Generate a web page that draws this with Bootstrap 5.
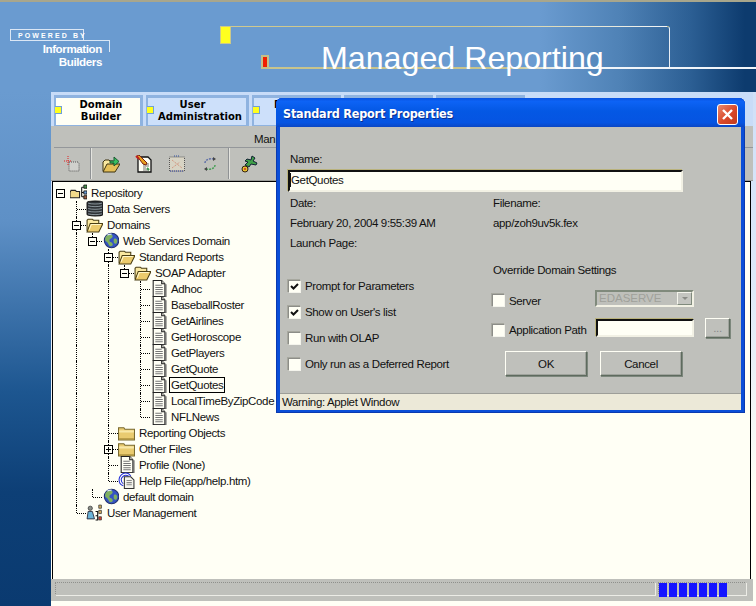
<!DOCTYPE html>
<html lang="en">
<head>
    <meta charset="UTF-8">
    <title>Managed Reporting</title>
    <link href="https://cdn.jsdelivr.net/npm/bootstrap@5.3.0/dist/css/bootstrap.min.css" rel="stylesheet">
    <style>
        html, body { width: 756px; height: 606px; overflow: hidden; }
        body {
            position: relative;
            font-family: "Liberation Sans", Arial, sans-serif;
            font-size: 11.5px;
            letter-spacing: -.35px;
            color: #111;
            background: #fffff5;
        }
        .icon-defs { position: absolute; }
        /* banner */
        .banner {
            position: relative;
            height: 92px;
            border-top: 2px solid #a8a68c;
            background: linear-gradient(90deg, #6a9bd0 0, #6a9bd0 540px, #4f82b6 620px, #2c5f94 690px, #0d3b6e 745px);
        }
        .logo-frame { position: absolute; left: 10px; top: 27px; width: 100px; height: 23px; }
        .logo-top { position: absolute; left: 0; top: 0; width: 74px; height: 12px; border: 1px solid #dbe7f5; border-bottom: 0; }
        .logo-bottom { position: absolute; left: 0; top: 11px; width: 100px; height: 12px; border-top: 1px solid #dbe7f5; border-right: 1px solid #dbe7f5; }
        .logo-by { position: absolute; left: 8px; top: 2px; color: #fff; font: bold 7px/9px "Liberation Sans", sans-serif; letter-spacing: 2.1px; white-space: nowrap; }
        .logo-name { position: absolute; right: 8px; top: 13px; text-align: right; color: #fff; font: bold 11.6px/13px "Liberation Sans", sans-serif; letter-spacing: -.4px; white-space: nowrap; }
        .deco-top { position: absolute; left: 231px; top: 24px; width: 439px; height: 42px; border-top: 1px solid #cfc98f; border-right: 1px solid #e8eef5; border-top-right-radius: 3px; }
        .deco-top::before { content: ""; position: absolute; left: 240px; right: 2px; top: -1px; height: 1px; background: linear-gradient(90deg, #cfc98f, #f1f5fa); }
        .deco-bottom { position: absolute; left: 268px; top: 65px; right: 0; height: 2px; background: linear-gradient(90deg, #c8c48c, #c8c48c 50%, #f1f5fa 60%); }
        .sq-yellow { position: absolute; left: 220px; top: 24px; width: 11px; height: 18px; background: #ffff1e; border: 1px solid #cbc98a; }
        .sq-red { position: absolute; left: 261px; top: 53px; width: 8px; height: 14px; background: #f01e00; border: 2px solid #c4bf88; }
        .title { position: absolute; left: 321px; top: 34px; color: #fff; font: 32.2px/44px "Liberation Sans", sans-serif; letter-spacing: 0; white-space: nowrap; }

        /* page frame */
        .side { width: 51px; background: linear-gradient(180deg, #6a9bd0 0, #5e90c6 130px, #1d5690 300px, #0d3f76 400px, #0a3a70 514px); }
        .app { width: 705px; height: 514px; background: linear-gradient(180deg, #cfe0f8 0, #dfe9f8 200px, #fffff5 400px); }
        .tabs { height: 34px; padding: 3px 0 0 3px; gap: 3px; background: #c8dcf8; width: 702px; }
        .tab {
            position: relative;
            width: 89px;
            height: 31px;
            border: 3px solid #8fb3e0;
            border-bottom-width: 1px;
            border-left-width: 2px;
            background: #cde0fa;
            text-align: center;
            font: bold 10px/12px "DejaVu Sans", sans-serif;
            letter-spacing: 0;
            color: #000;
            padding: 1px 0 0 6px;
        }
        .tab.on { background: #fffff5; }
        .tab.wide { width: 103px; }
        .tab.covered { padding-left: 0; }
        .tab::before { content: ""; position: absolute; left: -1px; top: 8px; width: 7px; height: 8px; background: #ffff1e; border: 1px solid #6f9fd8; border-left: 0; }
        .user-line { display: inline-block; margin-right: 15px; }
        .tools { width: 702px; background: #bfc0bb; height: 55px; border-bottom: 1px solid #9b9c98; }
        .tools-label { height: 21px; padding: 6px 0 0 203px; line-height: 15px; }
        .tools-bar { height: 33px; border-top: 1px solid #94979a; margin-left: 3px; padding-top: 5px; }
        .tools-bar svg { display: block; width: 18px; height: 18px; }
        .tool { width: 33px; display: flex; justify-content: center; padding-top: 2px; }
        .tool.first { width: 36px; }
        .tool-sep { width: 0; height: 31px; margin: -5px 2px 0 0; border-left: 1px solid #8f9294; border-right: 1px solid #e4e4df; }
        .tool-sep.second { margin: -5px 2px 0 2px; }
        .tree-wrap { width: 699px; height: 398px; margin-left: 1px; border-left: 1px solid #000; border-right: 1px solid #000; border-top: 1px solid #000; background: #fffff5; padding-top: 3px; }
        .status { width: 702px; height: 22px; background: #bfc0bb; padding: 3px 6px 0 4px; gap: 2px; }
        .status-field { height: 14px; border-top: 1px dotted #8f908c; border-left: 1px dotted #8f908c; border-right: 1px solid #ecece6; border-bottom: 1px solid #ecece6; }
        .status-progress { flex: 0 0 89px; }
        .progress-cell { width: 8px; height: 14px; background: #1414ff; margin-right: 2px; }

        /* tree */
        .node { height: 16px; line-height: 16px; white-space: nowrap; }
        .cell { position: relative; flex: 0 0 16px; width: 16px; height: 16px; }
        .g::before, .t::before, .l::before { content: ""; position: absolute; left: 7px; top: 0; bottom: 0; border-left: 1px dotted #000; }
        .l::before { bottom: 8px; }
        .t::after, .l::after { content: ""; position: absolute; left: 8px; top: 8px; width: 9px; border-top: 1px dotted #000; }
        .box { position: absolute; left: 3px; top: 4px; width: 9px; height: 9px; background: #fffff5; border: 1px solid #000; z-index: 1; }
        .box::before { content: ""; position: absolute; left: 1px; top: 3px; width: 5px; height: 1px; background: #000; }
        .box.plus::after { content: ""; position: absolute; left: 3px; top: 1px; width: 1px; height: 5px; background: #000; }
        .ico { flex: 0 0 22px; padding-left: 1px; }
        .ico svg { display: block; width: 17px; height: 17px; margin-top: -1px; }
        .sel { outline: 1px solid #000; padding: 0 1px; margin-left: -1px; height: 14px; line-height: 14px; }

        /* dialog */
        .dlg { position: absolute; left: 276px; top: 98px; width: 469px; height: 315px; background: #0a4ed8; border-radius: 6px 6px 0 0; padding: 0 4px 3px; box-shadow: inset 1px 0 #0a3ab0, inset -1px 0 #0a3ab0, inset 0 -1px #0a3ab0; }
        .dlg-head { height: 29px; margin: 0 -4px; padding: 6px 7px 0 7px; border-radius: 6px 6px 0 0; background: linear-gradient(180deg, #0a53e0 0, #0d63f5 12%, #0458e4 45%, #0554e2 85%, #0a46c4 100%); }
        .dlg-title { color: #fff; font: bold 12.5px/20px "DejaVu Sans Condensed", "DejaVu Sans", sans-serif; text-shadow: 1px 1px 0 #0a2f90; letter-spacing: -.21px; }
        .dlg-x { width: 21px; height: 21px; border: 1px solid #fff; border-radius: 3px; background: linear-gradient(135deg, #e98a6e, #d9482a 55%, #c23a1c); }
        .dlg-x svg { display: block; width: 19px; height: 19px; }
        .dlg-body { height: 266px; background: #bfc0bb; padding: 24px 0 0 10px; position: relative; }
        .dlg-foot { height: 17px; background: #ece9d8; border-top: 1px solid #9d9e99; padding-left: 2px; line-height: 16px; }
        .lbl { line-height: 16px; height: 16px; white-space: nowrap; }
        .lbl + .lbl { margin-top: 4px; }
        .name-lbl { margin-bottom: 3px; }
        .sunken { display: block; border-radius: 0; border: 2px solid; border-color: #111 #f2f1e4 #f2f1e4 #111; background: #fffff5; box-shadow: -1px -1px 0 #b9b27c; }
        input.sunken { font: 11.5px/16px "Liberation Sans", sans-serif; letter-spacing: -.35px; color: #111; padding: 0 0 0 1px; min-height: 0; }
        input.sunken:focus { background: #fffff5; box-shadow: -1px -1px 0 #b9b27c; border-color: #111 #f2f1e4 #f2f1e4 #111; color: #111; }
        .name-input { width: 395px; height: 22px; margin-left: -2px; }
        input.name-input { background: linear-gradient(#111, #111) 0 1px / 1px 14px no-repeat #fffff5; padding-bottom: 3px; }
        .path-input { width: 98px; height: 18px; }
        .cb { flex: 0 0 13px; width: 13px; height: 13px; margin: -2px 4px 0 0; background: #fffff5; border: 1px solid; border-color: #8c8d88 #f4f4ec #f4f4ec #8c8d88; box-shadow: -1px -1px 0 #a7a89f; }
        .cb svg { display: block; width: 11px; height: 11px; }
        .cb-row { height: 26px; margin-left: -2px; align-items: center; white-space: nowrap; }
        .win-btn { border-radius: 0; border: 1px solid; border-color: #fffff5 #5e6b5e #5e6b5e #fffff5; box-shadow: 1px 1px 0 #7c877c, inset -1px -1px 0 #9fa39c; background: #bfc0bb; color: #111; font: 11.5px/16px "Liberation Sans", sans-serif; letter-spacing: -.35px; padding: 0; }
        .win-btn:hover, .win-btn:active { background: #bfc0bb; color: #111; border-color: #fffff5 #5e6b5e #5e6b5e #fffff5; }
        .ok-btn { width: 82px; height: 25px; }
        .dots-btn { width: 25px; height: 20px; margin-left: 11px; color: #888; line-height: 14px; }
        .combo { width: 99px; height: 17px; border: 2px solid; border-color: #808a7c #f2f1e4 #f2f1e4 #808a7c; background: #bfc0bb; color: #9fa09a; line-height: 13px; padding-left: 2px; letter-spacing: 0; }
        .combo-arrow { width: 15px; height: 13px; border: 1px solid; border-color: #f4f4ec #7f8a7c #7f8a7c #f4f4ec; background: #c4c5c0; }
        .combo-arrow::before { content: ""; display: block; margin: 4px auto 0; width: 0; height: 0; border: 3px solid transparent; border-top-color: #8a8b86; border-bottom: 0; }
        .col-left { width: 203px; }
        .info-row { margin-top: 3px; }
        .checks { padding-top: 23px; }
        .override { padding-top: 11px; }
        .server-row { height: 17px; margin-top: 12px; }
        .server-check { width: 103px; margin: 6px 0 0 -1px; }
        .path-row { height: 20px; margin-top: 11px; }
        .path-check { width: 104px; margin: 6px 0 0 -1px; }
        .actions { margin: 13px 0 0 12px; gap: 13px; }
    </style>
</head>
<body>
    <svg width="0" height="0" class="icon-defs">
        <defs>
            <symbol id="i-doc" viewBox="0 0 16 16">
                <path d="M3 .5h8l3 3v12H3z" fill="#fffff5" stroke="#222"/>
                <path d="M11 .5v3h3" fill="#d8d8d0" stroke="#222"/>
                <path d="M5 5h6M5 7h7M5 9h7M5 11h7M5 13h7" stroke="#777"/>
                <path d="M15 4v12H4" fill="none" stroke="#555"/>
            </symbol>
            <symbol id="i-open" viewBox="0 0 16 16">
                <path d="M1 14V4l1-1h4l1 1h5v3" fill="#fbe9a0" stroke="#4b3f14"/>
                <path d="M1 15l3-8h12l-4 8z" fill="#eccb6c" stroke="#4b3f14"/>
                <path d="M3 13l2-5h9" fill="none" stroke="#fff6c8"/>
            </symbol>
            <symbol id="i-closed" viewBox="0 0 16 16">
                <path d="M.5 3.500h5l1 1.500h9v10H.5z" fill="#e9cb70" stroke="#7a6a30"/>
                <path d="M1 6h14v2H1z" fill="#f8e8a8"/>
                <path d="M1 14h14" stroke="#a58a38"/>
            </symbol>
            <symbol id="i-db" viewBox="0 0 16 16">
                <path d="M1 2.500c0-2 15-2 15 0v11c0 2-15 2-15 0z" fill="#2e3336" stroke="#111"/>
                <path d="M2 3c3 1 10 1 13 0M2 5.500c3 1 10 1 13 0M2 8c3 1 10 1 13 0M2 10.500c3 1 10 1 13 0M2 13c3 1 10 1 13 0" fill="none" stroke="#98a4aa" stroke-width=".8"/>
            </symbol>
            <symbol id="i-globe" viewBox="0 0 16 16">
                <circle cx="9" cy="8" r="6.8" fill="#3554c4" stroke="#1e2f70"/>
                <path d="M5 3c2-1 5-1 5 1S7 6 7 8s2 1 3 3-2 3-3 2-1-3-3-4-1-5 1-6zM12 6c2 0 3 2 2 4s-3 1-3-1 0-3 1-3z" fill="#7fb060"/>
                <path d="M5 3c1-1 3-1 4-1" stroke="#dbe7f5" fill="none"/>
            </symbol>
            <symbol id="i-repo" viewBox="0 0 16 16">
                <path d="M0 8l1-2h4l1 1h3v6H0z" fill="#f0d98a" stroke="#222"/>
                <path d="M11 3h2M11 3v9M11 8h2M11 12h2" stroke="#111" fill="none"/>
                <path d="M13 1h3v3h-3z" fill="#4c9a50" stroke="#111" stroke-width=".8"/>
                <path d="M13 6.500h3v3h-3z" fill="#6ca0d8" stroke="#111" stroke-width=".8"/>
                <path d="M13 11h3v3h-3z" fill="#a06040" stroke="#111" stroke-width=".8"/>
            </symbol>
            <symbol id="i-help" viewBox="0 0 16 16">
                <path d="M5 13c-3-1-4-3-4-6s3-6 6-6 4 1 5 3" fill="none" stroke="#2430d8"/>
                <path d="M5 11c-2-1-2-3-2-4s2-4 4-4 3 1 3 1" fill="none" stroke="#2430d8"/>
                <path d="M6 4.500h6l3 3v8H6z" fill="#f4f4ec" stroke="#333"/>
                <path d="M8 8h5M8 10h5M8 12h5" stroke="#888"/>
            </symbol>
            <symbol id="i-users" viewBox="0 0 16 16">
                <circle cx="4" cy="4" r="2" fill="#8a8f88" stroke="#333" stroke-width=".7"/>
                <path d="M1 14l1-7h4l2 7z" fill="#6cb4d8" stroke="#223" stroke-width=".8"/>
                <path d="M9 7h2v8H9M9 11h2" fill="none" stroke="#111"/>
                <path d="M12 1h2.500v3H12z" fill="#d8b060" stroke="#333" stroke-width=".7"/>
                <path d="M12 6h2.500v3H12z" fill="#d8b060" stroke="#333" stroke-width=".7"/>
                <path d="M12 12h2.500v3H12z" fill="#e04030" stroke="#333" stroke-width=".7"/>
            </symbol>
        </defs>
    </svg>

    <!-- banner -->
    <header class="banner">
        <div class="logo-frame">
            <div class="logo-top"></div>
            <div class="logo-bottom"></div>
            <div class="logo-by">POWERED BY</div>
            <div class="logo-name">Information<br>Builders</div>
        </div>
        <div class="deco-top"></div>
        <div class="deco-bottom"></div>
        <div class="sq-yellow"></div>
        <div class="sq-red"></div>
        <div class="title">Managed Reporting</div>
    </header>

    <div class="d-flex">
        <div class="side"></div>
        <div class="app">
            <!-- tabs -->
            <div class="tabs d-flex">
                <div class="tab on">Domain<br>Builder</div>
                <div class="tab wide"><span class="user-line">User</span><br>Administration</div>
                <div class="tab covered">Reports</div>
                <div class="tab"></div>
                <div class="tab"></div>
            </div>

            <!-- toolbar -->
            <div class="tools">
                <div class="tools-label">Man</div>
                <div class="tools-bar d-flex">
                    <div class="tool first"><svg viewBox="0 0 18 18"><path d="M6 7h9l1 1v8H6z" fill="#d0d0cc" stroke="#555" stroke-dasharray="1 1"/><path d="M5 1v10M1 6h8" stroke="#e02020" stroke-dasharray="1 1" fill="none"/></svg></div>
                    <div class="tool-sep"></div>
                    <div class="tool"><svg viewBox="0 0 18 18"><path d="M1 16V7l2-2h4l1 1h3v3" fill="#fbe9a0" stroke="#3d3310"/><path d="M1 17l4-8h13l-5 8z" fill="#e6c058" stroke="#3d3310"/><path d="M8 6h4V2l5 4.500-5 4.500V8H8z" fill="#38c060" stroke="#1a5a30"/></svg></div>
                    <div class="tool"><svg viewBox="0 0 18 18"><path d="M3 2h10l3 3v12H3z" fill="#fffff5" stroke="#111" stroke-width="1.300"/><path d="M8 9h6M8 11h6M8 13h3M8 15h6" stroke="#777"/><path d="M12 13l2 2" stroke="#3a9a50" stroke-width="2"/><path d="M2 1l2-1 8 8-1 2-3-1z" fill="#e8a020" stroke="#7a2010"/><path d="M1 1l3 3" stroke="#c02020" stroke-width="2"/></svg></div>
                    <div class="tool"><svg viewBox="0 0 18 18"><path d="M1.500 2h15v14h-15z" fill="#d8d4c4" stroke="#555" stroke-dasharray="1 1"/><path d="M4 13l8-6M4 5l10 8" stroke="#d08870" stroke-dasharray="1 1"/><path d="M2 16h14" stroke="#3040a0" stroke-dasharray="1 1"/><path d="M6 1h6" stroke="#3050a0" stroke-dasharray="1 1"/></svg></div>
                    <div class="tool"><svg viewBox="0 0 18 18"><path d="M4 8c0-3 4-5 9-4" fill="none" stroke="#6070a8" stroke-width="1.500" stroke-dasharray="2 1"/><path d="M14 10c0 3-4 5-9 4" fill="none" stroke="#48a058" stroke-width="1.500" stroke-dasharray="2 1"/><path d="M12 2l3 2-3 2zM6 16l-3-2 3-2z" fill="#444"/></svg></div>
                    <div class="tool-sep second"></div>
                    <div class="tool"><svg viewBox="0 0 18 18"><path d="M12 1l3 2-2 3 4 2-1 2-5-1-2 3-4-2 3-3-3-1 2-2 4 1z" fill="#3fa048" stroke="#123"/><circle cx="5" cy="14" r="3" fill="#e8c030" stroke="#321"/><circle cx="5" cy="14" r="1" fill="#d03020"/></svg></div>
                    <div class="tool"><svg viewBox="0 0 18 18"><path d="M6 3h3v8H6z" fill="#d03020" stroke="#411"/><circle cx="8" cy="15" r="2.500" fill="#e8c030" stroke="#321"/></svg></div>
                </div>
            </div>

            <!-- repository tree -->
            <div class="tree-wrap" id="tree"></div>

            <!-- status line -->
            <div class="status d-flex">
                <div class="status-field flex-grow-1"></div>
                <div class="status-field status-progress d-flex" id="progress"></div>
            </div>
        </div>
    </div>

    <!-- dialog window -->
    <div class="dlg">
        <div class="dlg-head d-flex justify-content-between">
            <div class="dlg-title">Standard Report Properties</div>
            <div class="dlg-x"><svg viewBox="0 0 19 19"><path d="M5 5l9 9M14 5l-9 9" stroke="#fff" stroke-width="2.400"/></svg></div>
        </div>
        <div class="dlg-body">
            <div class="lbl name-lbl">Name:</div>
            <input class="form-control sunken name-input" value="GetQuotes">
            <div class="d-flex info-row">
                <div class="col-left">
                    <div class="lbl">Date:</div>
                    <div class="lbl">February 20, 2004 9:55:39 AM</div>
                    <div class="lbl">Launch Page:</div>
                </div>
                <div>
                    <div class="lbl">Filename:</div>
                    <div class="lbl">app/zoh9uv5k.fex</div>
                </div>
            </div>
            <div class="d-flex">
                <div class="col-left checks">
                    <div class="d-flex cb-row"><span class="cb"><svg viewBox="0 0 11 11"><path d="M2 5l2.500 2.500L9 3" fill="none" stroke="#111" stroke-width="2"/></svg></span>Prompt for Parameters</div>
                    <div class="d-flex cb-row"><span class="cb"><svg viewBox="0 0 11 11"><path d="M2 5l2.500 2.500L9 3" fill="none" stroke="#111" stroke-width="2"/></svg></span>Show on User's list</div>
                    <div class="d-flex cb-row"><span class="cb"></span>Run with OLAP</div>
                    <div class="d-flex cb-row"><span class="cb"></span>Only run as a Deferred Report</div>
                </div>
                <div class="flex-grow-1 override">
                    <div class="lbl">Override Domain Settings</div>
                    <div class="d-flex align-items-center server-row">
                        <div class="d-flex align-items-center server-check"><span class="cb"></span>Server</div>
                        <div class="combo d-flex justify-content-between">EDASERVE<span class="combo-arrow"></span></div>
                    </div>
                    <div class="d-flex align-items-center path-row">
                        <div class="d-flex align-items-center path-check"><span class="cb"></span>Application Path</div>
                        <input class="form-control sunken path-input">
                        <button class="btn win-btn dots-btn" type="button">...</button>
                    </div>
                    <div class="d-flex actions">
                        <button class="btn win-btn ok-btn" type="button">OK</button>
                        <button class="btn win-btn ok-btn" type="button">Cancel</button>
                    </div>
                </div>
            </div>
        </div>
        <div class="dlg-foot">Warning: Applet Window</div>
    </div>

    <script src="https://cdn.jsdelivr.net/npm/bootstrap@5.3.0/dist/js/bootstrap.bundle.min.js"></script>
    <script>
        // one char per indent cell: . blank, | guide, t tee, l last elbow; trailing m/p adds a box
        const nodes = [
            ['m',      'i-repo',   'Repository'],
            ['.t',     'i-db',     'Data Servers'],
            ['.tm',    'i-open',   'Domains'],
            ['.|lm',   'i-globe',  'Web Services Domain'],
            ['.|.tm',  'i-open',   'Standard Reports'],
            ['.|.|lm', 'i-open',   'SOAP Adapter'],
            ['.|.|.t', 'i-doc',    'Adhoc'],
            ['.|.|.t', 'i-doc',    'BaseballRoster'],
            ['.|.|.t', 'i-doc',    'GetAirlines'],
            ['.|.|.t', 'i-doc',    'GetHoroscope'],
            ['.|.|.t', 'i-doc',    'GetPlayers'],
            ['.|.|.t', 'i-doc',    'GetQuote'],
            ['.|.|.t', 'i-doc',    'GetQuotes', true],
            ['.|.|.t', 'i-doc',    'LocalTimeByZipCode'],
            ['.|.|.l', 'i-doc',    'NFLNews'],
            ['.|.t',   'i-closed', 'Reporting Objects'],
            ['.|.tp',  'i-closed', 'Other Files'],
            ['.|.t',   'i-doc',    'Profile (None)'],
            ['.|.l',   'i-help',   'Help File(app/help.htm)'],
            ['.|l',    'i-globe',  'default domain'],
            ['.l',     'i-users',  'User Management']
        ];

        const tree = document.getElementById('tree');
        nodes.forEach(([cols, icon, text, selected]) => {
            const box = /[mp]$/.test(cols) ? cols.slice(-1) : '';
            const spec = (box ? cols.slice(0, -1) : cols) || '.';
            let html = '';
            [...spec].forEach((c, i) => {
                const cls = c === '|' ? 'g' : c === 't' ? 't' : c === 'l' ? 'l' : '';
                const last = i === spec.length - 1;
                const boxHtml = last && box ? `<span class="box ${box === 'p' ? 'plus' : ''}"></span>` : '';
                html += `<span class="cell ${cls}">${boxHtml}</span>`;
            });
            html += `<span class="ico"><svg><use href="#${icon}"/></svg></span>`;
            html += `<span class="${selected ? 'sel' : ''}">${text}</span>`;
            const row = document.createElement('div');
            row.className = 'node d-flex align-items-center';
            row.innerHTML = html;
            tree.appendChild(row);
        });

        const progress = document.getElementById('progress');
        for (let i = 0; i < 7; i++) {
            const seg = document.createElement('div');
            seg.className = 'progress-cell';
            progress.appendChild(seg);
        }
    </script>
</body>
</html>
